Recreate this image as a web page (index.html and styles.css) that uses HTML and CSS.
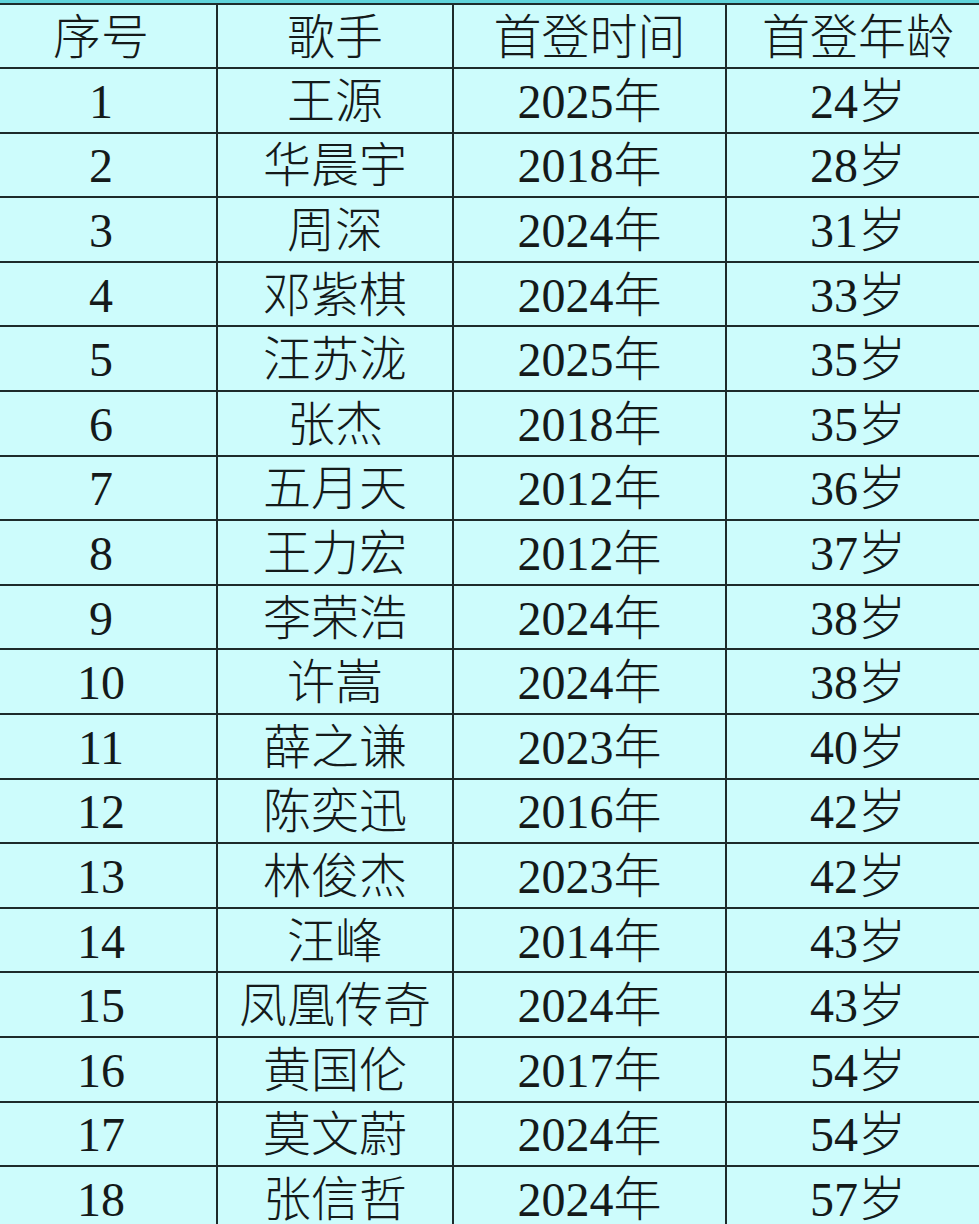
FILE: index.html
```html
<!DOCTYPE html>
<html lang="zh-CN">
<head>
<meta charset="utf-8">
<title>歌手首登年龄</title>
<link rel="stylesheet" href="styles.css">
</head>
<body>
<div class="page">
  <div class="strip"></div>
  <table class="grid">
    <colgroup>
      <col class="c1"><col class="c2"><col class="c3"><col class="c4">
    </colgroup>
    <thead>
      <tr><th>序号</th><th>歌手</th><th>首登时间</th><th>首登年龄</th></tr>
    </thead>
    <tbody>
      <tr><td>1</td><td>王源</td><td>2025年</td><td>24岁</td></tr>
      <tr><td>2</td><td>华晨宇</td><td>2018年</td><td>28岁</td></tr>
      <tr><td>3</td><td>周深</td><td>2024年</td><td>31岁</td></tr>
      <tr><td>4</td><td>邓紫棋</td><td>2024年</td><td>33岁</td></tr>
      <tr><td>5</td><td>汪苏泷</td><td>2025年</td><td>35岁</td></tr>
      <tr><td>6</td><td>张杰</td><td>2018年</td><td>35岁</td></tr>
      <tr><td>7</td><td>五月天</td><td>2012年</td><td>36岁</td></tr>
      <tr><td>8</td><td>王力宏</td><td>2012年</td><td>37岁</td></tr>
      <tr><td>9</td><td>李荣浩</td><td>2024年</td><td>38岁</td></tr>
      <tr><td>10</td><td>许嵩</td><td>2024年</td><td>38岁</td></tr>
      <tr><td>11</td><td>薛之谦</td><td>2023年</td><td>40岁</td></tr>
      <tr><td>12</td><td>陈奕迅</td><td>2016年</td><td>42岁</td></tr>
      <tr><td>13</td><td>林俊杰</td><td>2023年</td><td>42岁</td></tr>
      <tr><td>14</td><td>汪峰</td><td>2014年</td><td>43岁</td></tr>
      <tr><td>15</td><td>凤凰传奇</td><td>2024年</td><td>43岁</td></tr>
      <tr><td>16</td><td>黄国伦</td><td>2017年</td><td>54岁</td></tr>
      <tr><td>17</td><td>莫文蔚</td><td>2024年</td><td>54岁</td></tr>
      <tr><td>18</td><td>张信哲</td><td>2024年</td><td>57岁</td></tr>
    </tbody>
  </table>
</div>
</body>
</html>
```

FILE: styles.css
```css
html, body {
  margin: 0;
  padding: 0;
  overflow: hidden;
  background: #cdfcfc;
}

.page {
  width: 979px;
  height: 1224px;
  overflow: hidden;
  background: #cdfcfc;
}

.strip {
  height: 3px;
  background: #5fd3da;
}

.grid {
  margin-left: -16px;
  width: 1005px;
  table-layout: fixed;
  border-collapse: collapse;
  font-family: "Liberation Serif", "Noto Sans CJK SC", serif;
  font-size: 48px;
  font-weight: 300;
  color: #141a1a;
}

.c1 { width: 232px; }
.c2 { width: 236px; }
.c3 { width: 273px; }
.c4 { width: 264px; }

.grid th,
.grid td {
  border: 2px solid #1d2b2b;
  height: 59.6px;
  padding: 3px 0 0;
  text-align: center;
  vertical-align: middle;
  font-weight: 300;
  line-height: 1;
}

.grid thead th {
  height: 59px;
}
```
